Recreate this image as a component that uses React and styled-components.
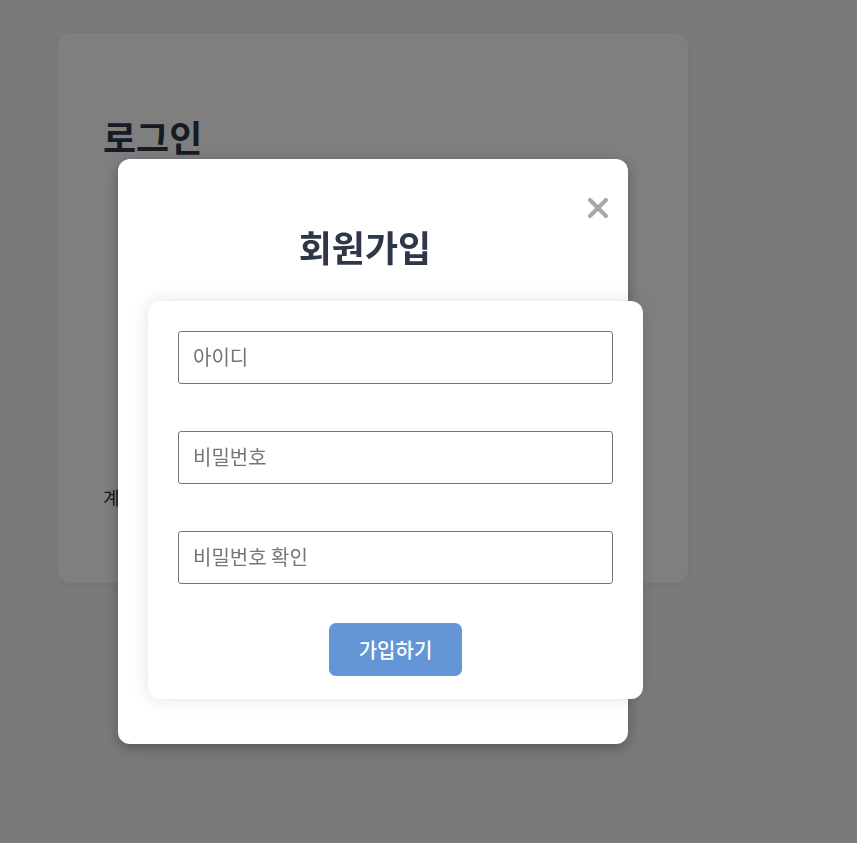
import React from "react";
import styled, { createGlobalStyle } from "styled-components";

const Global = createGlobalStyle`
  html, body { margin: 0; padding: 0; }
  body {
    background: #f4f5f8;
    font-family: "Noto Sans CJK KR", "Noto Sans", sans-serif;
    width: 857px;
    height: 843px;
    overflow: hidden;
  }
  * { box-sizing: border-box; }
`;

const Page = styled.div`
  padding: 33px 0 0 58px;
`;

const LoginCard = styled.div`
  width: 630px;
  height: 550px;
  background: #fff;
  border-radius: 14px;
  box-shadow: 0 2px 10px rgba(0, 0, 0, 0.06);
  padding: 80px 45px 0;
  display: flex;
  flex-direction: column;
`;

const LoginTitle = styled.h1`
  margin: 0;
  font-size: 36px;
  font-weight: 700;
  color: #2d3748;
  line-height: 1.3;
`;

const LoginFooter = styled.p`
  margin: 324px 0 0;
  font-size: 18px;
  color: #333;
`;

const Overlay = styled.div`
  position: fixed;
  inset: 0;
  background: rgba(0, 0, 0, 0.5);
  padding: 159px 0 0 118px;
`;

const Modal = styled.div`
  position: relative;
  width: 510px;
  height: 585px;
  background: #fff;
  border-radius: 12px;
  box-shadow: 0 4px 14px rgba(0, 0, 0, 0.3);
  padding: 64px 30px 0;
`;

const CloseButton = styled.button`
  position: absolute;
  top: 33px;
  right: 14px;
  border: none;
  background: none;
  padding: 4px;
  cursor: pointer;
  display: flex;
`;

const ModalTitle = styled.h2`
  margin: 0 16px 0 0;
  text-align: center;
  font-size: 36px;
  font-weight: 700;
  color: #2d3748;
  line-height: 46px;
`;

const FormCard = styled.form`
  margin-top: 32px;
  width: 495px;
  background: #fff;
  border-radius: 12px;
  box-shadow: 0 0 18px rgba(0, 0, 0, 0.12);
  padding: 30px 30px 23px;
  display: flex;
  flex-direction: column;
  gap: 47px;
`;

const Input = styled.input`
  width: 435px;
  height: 53px;
  border: 1px solid #767676;
  border-radius: 3px;
  padding: 0 14px 2px;
  font-family: "Noto Sans CJK KR", "Noto Sans", sans-serif;
  font-size: 20px;
  color: #222;
  &::placeholder { color: #757575; }
`;

const Submit = styled.button`
  align-self: center;
  margin-top: -8px;
  width: 133px;
  height: 53px;
  border: none;
  border-radius: 7px;
  background: #6495d6;
  color: #fff;
  font-family: "Noto Sans CJK KR", "Noto Sans", sans-serif;
  font-size: 20px;
  font-weight: 500;
`;

const XIcon = () => (
  <svg width="24" height="24" viewBox="0 0 24 24">
    <path d="M4 4 L20 20 M20 4 L4 20" stroke="#a8a8a8" strokeWidth="4.2" strokeLinecap="round" />
  </svg>
);

export default function App() {
  return (
    <>
      <Global />
      <Page>
        <LoginCard>
          <LoginTitle>로그인</LoginTitle>
          <LoginFooter>계정이 없으신가요? 회원가입</LoginFooter>
        </LoginCard>
      </Page>
      <Overlay>
        <Modal>
          <CloseButton type="button" aria-label="닫기">
            <XIcon />
          </CloseButton>
          <ModalTitle>회원가입</ModalTitle>
          <FormCard onSubmit={(e) => e.preventDefault()}>
            <Input placeholder="아이디" />
            <Input type="password" placeholder="비밀번호" />
            <Input type="password" placeholder="비밀번호 확인" />
            <Submit type="submit">가입하기</Submit>
          </FormCard>
        </Modal>
      </Overlay>
    </>
  );
}
